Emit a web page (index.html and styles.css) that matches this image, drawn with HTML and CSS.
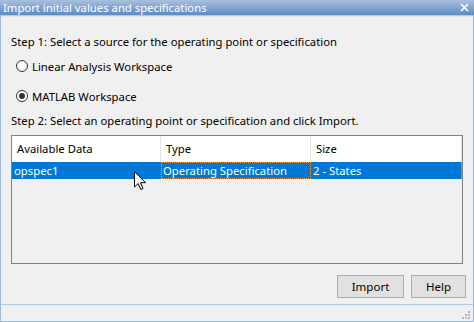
FILE: index.html
```html
<!DOCTYPE html>
<html>
<head>
<meta charset="utf-8">
<link rel="stylesheet" href="styles.css">
</head>
<body>
<div class="window">
  <div class="titlebar">
    <span class="title">Import initial values and specifications</span>
    <svg class="close" width="9" height="9" viewBox="0 0 9 9"><path d="M1 1 L8 8 M8 1 L1 8" stroke="#fff" stroke-width="1.6" fill="none"/></svg>
  </div>
  <div class="divider"></div>
  <div class="content">
    <div class="label step1">Step 1: Select a source for the operating point or specification</div>
    <div class="radio-row r1"><span class="radio"></span><span>Linear Analysis Workspace</span></div>
    <div class="radio-row r2"><span class="radio checked"></span><span>MATLAB Workspace</span></div>
    <div class="label step2">Step 2: Select an operating point or specification and click Import.</div>
    <div class="table">
      <div class="row header">
        <div class="cell c1">Available Data</div>
        <div class="cell c2">Type</div>
        <div class="cell c3">Size</div>
      </div>
      <div class="row selected">
        <div class="cell c1">opspec1</div>
        <div class="cell c2 focus">Operating Specification</div>
        <div class="cell c3">2 - States</div>
      </div>
    </div>
    <div class="buttons">
      <button class="btn import">Import</button>
      <button class="btn help">Help</button>
    </div>
  </div>
  <div class="statusbar">
    <svg class="grip" width="9" height="9" viewBox="0 0 9 9">
      <rect x="6" y="0" width="2" height="2" fill="#b9b9b9"/>
      <rect x="3" y="3" width="2" height="2" fill="#b9b9b9"/>
      <rect x="6" y="3" width="2" height="2" fill="#b9b9b9"/>
      <rect x="0" y="6" width="2" height="2" fill="#b9b9b9"/>
      <rect x="3" y="6" width="2" height="2" fill="#b9b9b9"/>
      <rect x="6" y="6" width="2" height="2" fill="#b9b9b9"/>
    </svg>
  </div>
  <svg class="cursor" width="13" height="20" viewBox="0 0 13 20"><path d="M0.5 0.5 L0.5 16 L4.2 12.5 L6.8 18.5 L9 17.5 L6.5 11.7 L11.5 11.7 Z" fill="#fff" stroke="#000" stroke-width="1" stroke-linejoin="miter"/></svg>
</div>
</body>
</html>
```
FILE: styles.css
```css
* { box-sizing: border-box; }
html, body { margin: 0; padding: 0; }
body {
  width: 474px;
  height: 322px;
  background: #f0f0f0;
  font-family: "Noto Sans", "Open Sans", sans-serif;
  font-size: 11.3px;
  color: #000;
  overflow: hidden;
}
.window {
  position: relative;
  width: 474px;
  height: 322px;
  border-left: 1px solid #9db9d9;
  border-right: 1px solid #9db9d9;
  border-bottom: 1px solid #9db9d9;
  display: flex;
  flex-direction: column;
}
.titlebar {
  height: 15px;
  background: linear-gradient(#a9c0dc, #5c8bc6);
  display: flex;
  align-items: center;
  justify-content: space-between;
  padding: 0 3px 0 1px;
  margin-left: -1px;
  margin-right: -1px;
}
.title {
  color: #fff;
  line-height: 15px;
  padding-left: 2px;
}
.close { margin-right: 2px; }
.divider {
  height: 2px;
  border-top: 1px solid #c6c6c6;
  background: #e6e6e6;
}
.content {
  flex: 1;
  padding: 0 10px 0 10px;
  display: flex;
  flex-direction: column;
}
.label { line-height: 16px; }
.step1 { margin-top: 17px; }
.radio-row {
  display: flex;
  align-items: center;
  gap: 4px;
  height: 16px;
  padding-left: 5px;
}
.r1 { margin-top: 8px; }
.r2 { margin-top: 14px; }
.radio {
  width: 12px;
  height: 12px;
  border: 1px solid #333;
  border-radius: 50%;
  background: #fff;
  display: flex;
  align-items: center;
  justify-content: center;
}
.radio.checked::after {
  content: "";
  width: 6px;
  height: 6px;
  border-radius: 50%;
  background: #333;
}
.step2 { margin-top: 9px; }
.table {
  margin-top: 6px;
  width: 452px;
  height: 129px;
  border: 1px solid #828282;
  background: #f0f0f0;
}
.row { display: flex; }
.header {
  height: 26px;
  background: #fff;
  border-right: 1px solid #e0e0e0;
}
.header .cell {
  padding-left: 5px;
  line-height: 26px;
  border-right: 1px solid #e5e5e5;
}
.header .c3 { border-right: none; }
.selected {
  height: 17px;
  background: #0078d7;
  color: #fff;
  border-right: 1px solid #8a8a8a;
}
.selected .cell {
  line-height: 17px;
  padding-left: 2px;
}
.c1 { width: 149px; }
.c2 { width: 150px; }
.c3 { flex: 1; }
.focus { outline: 1px dotted #f0a040; outline-offset: -1px; }
.buttons {
  margin-top: 11px;
  display: flex;
  justify-content: flex-end;
  gap: 7px;
  margin-right: -3px;
}
.btn {
  height: 23px;
  border: 1px solid #adadad;
  background: #e1e1e1;
  font-family: inherit;
  font-size: 11.5px;
  color: #000;
  padding: 0;
}
.import { width: 67px; }
.help { width: 55px; }
.statusbar {
  margin-top: 6px;
  height: 17px;
  border-top: 1px solid #b5c9dd;
  position: relative;
}
.grip {
  position: absolute;
  right: 2px;
  bottom: 1px;
}
.cursor {
  position: absolute;
  left: 133px;
  top: 171px;
}
```
